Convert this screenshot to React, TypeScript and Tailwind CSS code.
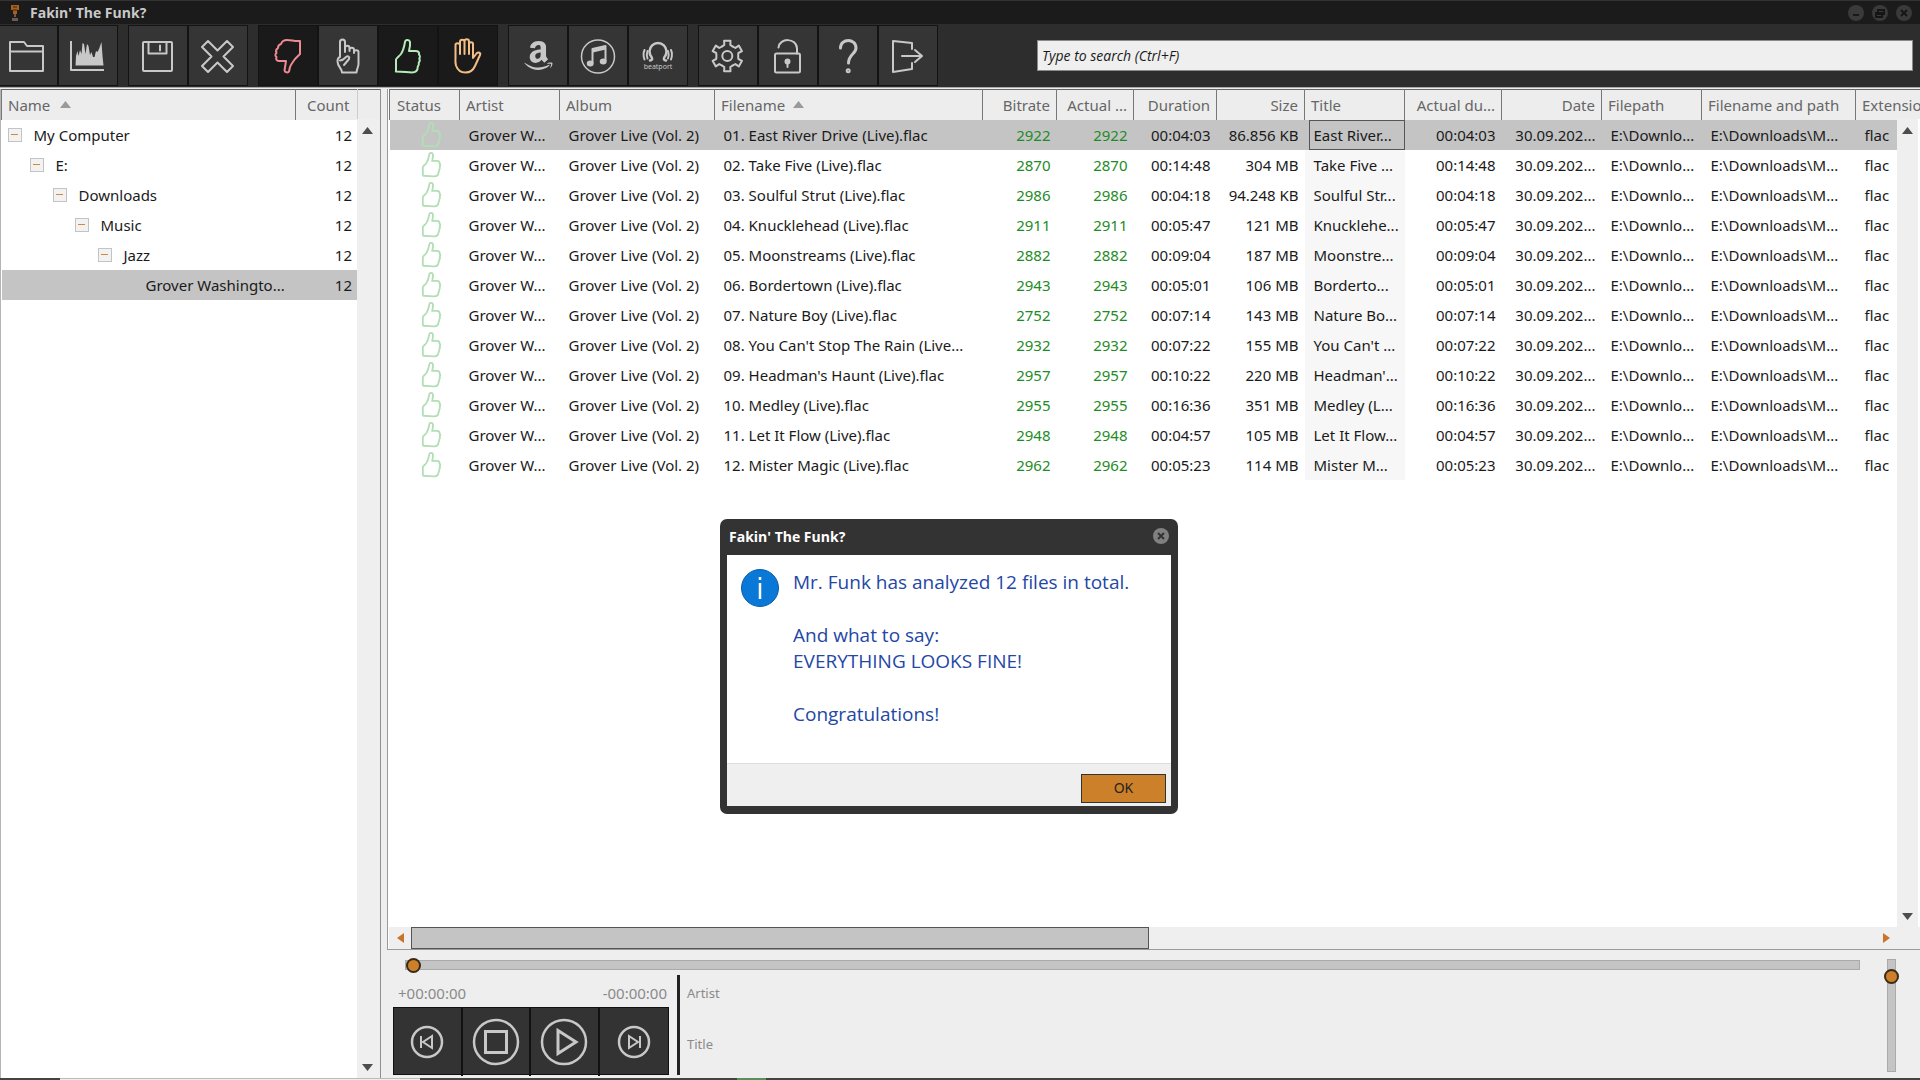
import React from "react";
import { FaAmazon } from "react-icons/fa";

const THUMB_UP =
  "M8 35.5v-12c0-1 3-3 5-5.5 2-3 3-6 4-12 .5-3 4.5-2.5 5 0 .3 3-.2 6-1 9h6.5c3 0 4 1.5 3.5 3.5 1 1 1.2 3 .3 4 .8 1.5.5 3-.5 4 .3 1.8 0 3-1 4 0 4-2.5 6-6 6-5 0-8-1-16-1z";

function Icon({ children, width = 2 }: { children: React.ReactNode; width?: number }) {
  return (
    <svg
      viewBox="0 0 40 40"
      className="size-10"
      fill="none"
      stroke="currentColor"
      strokeWidth={width}
      strokeLinejoin="round"
      strokeLinecap="round"
      aria-hidden="true"
    >
      {children}
    </svg>
  );
}

const gearPoints = Array.from({ length: 6 })
  .flatMap((_, k) => {
    const mid = -90 + k * 60;
    return [
      [-24, 11],
      [-15, 11.5],
      [-12, 15.5],
      [12, 15.5],
      [15, 11.5],
      [24, 11],
    ].map(([a, r]) => {
      const t = ((mid + a) * Math.PI) / 180;
      return `${(19.3 + r * Math.cos(t)).toFixed(1)},${(20 + r * Math.sin(t)).toFixed(1)}`;
    });
  })
  .join(" ");

type Tool = { label: string; icon: React.ReactNode; tone?: string };

const toolGroups: Tool[][] = [
  [
    { label: "Open folder", icon: <Icon><path d="M2 35V6h14l3 4h16v25zM2 15.5h33" /></Icon> },
    {
      label: "Spectrum",
      icon: (
        <Icon>
          <path d="M3 5v29h33" strokeLinecap="butt" />
          <path
            fill="currentColor"
            stroke="none"
            d="M7.500 29.500 8 20l1.500-5 1 5 1.500-6 1.500 4L14.500 7l1.500 1 1.500 10L19 8l1.500 2 1.500 9 1.500-3 1.500 5 1.500 0 1.500-6 1.500 1 1.500-3L33.500 6l1 14 1 9.500z"
          />
        </Icon>
      ),
    },
  ],
  [
    { label: "Save", icon: <Icon><rect x="5" y="6" width="29" height="29" rx="1" /><path d="M10.500 6v11.500h18V6M22 9.500v5" /></Icon> },
    { label: "Remove", icon: <Icon><path d="M10 5l9.500 9.500L29 5l6 6-9.500 9.500L35 30l-6 6-9.500-9.500L10 36l-6-6 9.500-9.500L4 11z" /></Icon> },
  ],
  [
    {
      label: "Show fakes",
      tone: "bg-[#1a1a1a] text-[#ee8a92]",
      icon: (
        <Icon>
          <path d="M32 5v13l-5 5c-2 3-4 5-5 8l-1 4.500c-1 1.500-4 1-4.500-1l1.500-9.500h-7c-2.500 0-3.500-2-2.500-4-1.500-1-1.500-3 0-4-1-2 0-4 1.500-5 0-2 1-3.500 3-4 1-3 3-4 6-4 5 0 7 1.500 13 1z" />
        </Icon>
      ),
    },
    {
      label: "Show unchecked",
      icon: (
        <Icon>
          <path d="M12 21V6c0-3.500 5-3.500 5 0v10M17 15v-3c0-3 4.500-3 4.500 0v3M21.500 14c0-3 4.500-3 4.500 0v3M26 16c0-2.500 4.500-2.500 4.500 0v12c0 3-1.500 4-2 8.500H14c0-4-4.500-6-4.500-11 0-3 .5-4 2.500-4.500M12 24.500c3 0 4-1.500 6-3.500 2-1.500 4 0 3 2l-5 6" />
        </Icon>
      ),
    },
    { label: "Show good", tone: "bg-[#1a1a1a] text-[#b4ecb8]", icon: <Icon><path d={THUMB_UP} /></Icon> },
    {
      label: "Show stopped",
      tone: "bg-[#1a1a1a] text-[#f3bd86]",
      icon: (
        <Icon>
          <path d="M7.500 22V9c0-2.500 4-2.500 4.500 0v9V6c0-3 4.500-3 4.500 0v12V5.500c0-3 4.500-3 4.500 0V18V8c0-2.500 4-2.500 4 0v14l3.500-4.500c2-2 4.500-.5 3.500 1.500l-5 11c-2 4.500-5 6.500-9.500 6.500-5.500 0-8-2.500-9.500-7-1-4-.5-5-.5-7.500z" />
        </Icon>
      ),
    },
  ],
  [
    { label: "Amazon", icon: <FaAmazon className="size-[33px]" aria-hidden="true" /> },
    {
      label: "iTunes",
      icon: (
        <Icon width={2}>
          <circle cx="20" cy="20.500" r="16.500" strokeWidth="1.500" />
          <path d="M14.500 27V13l13-3v15" strokeLinecap="butt" />
          <path d="M14.500 15l13-3" strokeWidth="3" strokeLinecap="butt" />
          <ellipse cx="12.200" cy="27.500" rx="2.500" ry="2" fill="currentColor" />
          <ellipse cx="25.200" cy="25.500" rx="2.500" ry="2" fill="currentColor" />
        </Icon>
      ),
    },
    {
      label: "Beatport",
      icon: (
        <Icon>
          <path strokeWidth="2.500" d="M12 24.500c2.500-.5 2.500-1.500 1.500-3.500A8.500 8.500 0 1 1 26.500 21c-1 2-1 3 1.500 3.500" />
          <path d="M6.500 14c-1.300 3-1.300 6 0 9.500M9.500 15c-1 3-1 5 0 7.500M33 14c1.300 3 1.300 6 0 9.500M30 15c1 3 1 5 0 7.500" />
          <text x="20" y="33" textAnchor="middle" fontSize="7" fill="currentColor" stroke="none">
            beatport
          </text>
        </Icon>
      ),
    },
  ],
  [
    { label: "Settings", icon: <Icon><polygon points={gearPoints} /><circle cx="19.300" cy="20" r="5" /></Icon> },
    {
      label: "Unlock",
      icon: (
        <Icon>
          <rect x="7" y="17.500" width="25" height="19" rx="1.500" />
          <path d="M10.500 11.500c1-10 18-10 18.500 1v5" />
          <circle cx="19.500" cy="25.500" r="2" fill="currentColor" />
          <path d="M19.500 26v5" />
        </Icon>
      ),
    },
    {
      label: "Help",
      icon: (
        <Icon width={3}>
          <path d="M12.500 12c0-10 15.500-10 15.500 0 0 6-7.500 6.500-7.500 15" />
          <circle cx="20.200" cy="34.700" r="1" />
        </Icon>
      ),
    },
    { label: "Exit", icon: <Icon><path d="M24 13V7L5 5v31l19-3v-6M14 20h20M27 14l7 6-7 6" /></Icon> },
  ],
];

type Column = { name: string; width: string; right?: boolean; sorted?: boolean; tint?: string };

const columns: Column[] = [
  { name: "Artist", width: "w-[100px]" },
  { name: "Album", width: "w-[155px]" },
  { name: "Filename", width: "w-[268px]", sorted: true },
  { name: "Bitrate", width: "w-[74px]", right: true, tint: "text-[#1d8c26]" },
  { name: "Actual ...", width: "w-[77px]", right: true, tint: "text-[#1d8c26]" },
  { name: "Duration", width: "w-[83px]", right: true },
  { name: "Size", width: "w-[88px]", right: true },
  { name: "Title", width: "w-[100px]" },
  { name: "Actual du...", width: "w-[97px]", right: true },
  { name: "Date", width: "w-[100px]", right: true },
  { name: "Filepath", width: "w-[100px]" },
  { name: "Filename and path", width: "w-[154px]" },
];

const tracks: [string, string, string, string, string][] = [
  ["01. East River Drive (Live).flac", "2922", "00:04:03", "86.856 KB", "East River..."],
  ["02. Take Five (Live).flac", "2870", "00:14:48", "304 MB", "Take Five ..."],
  ["03. Soulful Strut (Live).flac", "2986", "00:04:18", "94.248 KB", "Soulful Str..."],
  ["04. Knucklehead (Live).flac", "2911", "00:05:47", "121 MB", "Knucklehe..."],
  ["05. Moonstreams (Live).flac", "2882", "00:09:04", "187 MB", "Moonstre..."],
  ["06. Bordertown (Live).flac", "2943", "00:05:01", "106 MB", "Borderto..."],
  ["07. Nature Boy (Live).flac", "2752", "00:07:14", "143 MB", "Nature Bo..."],
  ["08. You Can't Stop The Rain (Live...", "2932", "00:07:22", "155 MB", "You Can't ..."],
  ["09. Headman's Haunt (Live).flac", "2957", "00:10:22", "220 MB", "Headman'..."],
  ["10. Medley (Live).flac", "2955", "00:16:36", "351 MB", "Medley (L..."],
  ["11. Let It Flow (Live).flac", "2948", "00:04:57", "105 MB", "Let It Flow..."],
  ["12. Mister Magic (Live).flac", "2962", "00:05:23", "114 MB", "Mister M..."],
];

const folders = [
  { name: "My Computer", indent: "pl-[6px]" },
  { name: "E:", indent: "pl-[28px]" },
  { name: "Downloads", indent: "pl-[51px]" },
  { name: "Music", indent: "pl-[73px]" },
  { name: "Jazz", indent: "pl-[96px]" },
];

const arrows = {
  up: "M0 7L5.500 0 11 7z",
  down: "M0 0h11L5.500 7z",
};

function Arrow({ dir, className }: { dir: "up" | "down"; className: string }) {
  return (
    <svg viewBox="0 0 11 7" className={`h-[7px] w-[11px] ${className}`} fill="currentColor" aria-hidden="true">
      <path d={arrows[dir]} />
    </svg>
  );
}

function VerticalScrollbar() {
  return (
    <div className="flex h-full flex-col items-center justify-between bg-[#efefef]">
      <button type="button" aria-label="Scroll up" className="flex h-[22px] w-full items-center justify-center">
        <Arrow dir="up" className="text-[#4d4d4d]" />
      </button>
      <button type="button" aria-label="Scroll down" className="flex h-[22px] w-full items-center justify-center">
        <Arrow dir="down" className="text-[#4d4d4d]" />
      </button>
    </div>
  );
}

function FolderTree() {
  return (
    <aside className="relative w-[381px] shrink-0 overflow-hidden border-x border-l-[#b5b5b5] border-r-[#8f8f8f] bg-white">
      <table className="w-full table-fixed border-collapse">
        <thead>
          <tr className="h-[30px] border-t border-[#666] bg-[#ededed] text-[#666]">
            <th className="border-l border-[#777] pl-[6px] text-left font-normal">
              <span className="flex items-center gap-[10px]">
                Name <Arrow dir="up" className="text-[#9a9a9a]" />
              </span>
            </th>
            <th className="w-[62px] border-l border-[#777] pr-[7px] text-right font-normal">Count</th>
            <th className="w-[23px] border-l border-[#ccc]" aria-label="Scrollbar" />
          </tr>
        </thead>
        <tbody>
          {folders.map((f) => (
            <tr key={f.name} className="h-[30px]">
              <td className={f.indent}>
                <span className="flex items-center gap-[12px]">
                  <button
                    type="button"
                    aria-label={`Collapse ${f.name}`}
                    className="flex size-[14px] items-center justify-center border border-[#bfc3cc] bg-[#f4f2ee]"
                  >
                    <span className="h-px w-[7px] bg-[#c98a4b]" />
                  </button>
                  {f.name}
                </span>
              </td>
              <td className="pr-[5px] text-right">12</td>
              <td />
            </tr>
          ))}
          <tr className="h-[30px] bg-[#c4c4c4]">
            <td className="whitespace-nowrap pl-[144px]">Grover Washingto...</td>
            <td className="pr-[5px] text-right">12</td>
            <td />
          </tr>
        </tbody>
      </table>
      <div className="absolute top-[30px] right-0 bottom-0 w-[23px] pr-[3px]  bg-[#efefef]">
        <VerticalScrollbar />
      </div>
    </aside>
  );
}

function TrackTable() {
  return (
    <section className="relative flex min-h-0 flex-1 flex-col overflow-hidden border-b border-l border-[#9a9a9a] bg-white pl-px">
      <div className="min-h-0 flex-1 overflow-hidden">
        <table className="w-full table-fixed border-collapse whitespace-nowrap">
          <thead>
            <tr className="h-[30px] border-t border-[#666] bg-[#ededed] text-[#666]">
              <th className="w-[70px] border-l border-[#777] pl-[7px] text-left font-normal">Status</th>
              {columns.map((c) => (
                <th
                  key={c.name}
                  className={`border-l border-[#777] px-[6px] font-normal ${c.width} ${c.right ? "text-right" : "text-left"}`}
                >
                  {c.sorted ? (
                    <span className="flex items-center gap-[8px]">
                      {c.name} <Arrow dir="up" className="text-[#9a9a9a]" />
                    </span>
                  ) : (
                    c.name
                  )}
                </th>
              ))}
              <th className="overflow-hidden border-l border-[#777] pl-[6px] text-left font-normal">Extension</th>
            </tr>
          </thead>
          <tbody>
            {tracks.map(([file, rate, time, size, title], i) => {
              const selected = i === 0;
              const values = [
                "Grover W...",
                "Grover Live (Vol. 2)",
                file,
                rate,
                rate,
                time,
                size,
                title,
                time,
                "30.09.202...",
                "E:\\Downlo...",
                "E:\\Downloads\\M...",
              ];
              return (
                <tr key={file} className={`h-[30px] ${selected ? "bg-[#c4c4c4]" : ""}`}>
                  <td className="pl-[27px]">
                    <svg
                      viewBox="0 0 40 40"
                      className="size-[29px]"
                      fill="none"
                      stroke="#b2deb5"
                      strokeWidth="2.500"
                      role="img"
                      aria-label="Good"
                    >
                      <path d={THUMB_UP} />
                    </svg>
                  </td>
                  {columns.map((c, k) =>
                    c.name === "Title" ? (
                      <td key={c.name} className={selected ? "pl-[4px]" : "bg-[#f7f7f7] pl-[4px]"}>
                        <span
                          className={`flex h-[30px] items-center border px-1 ${selected ? "border-[#555]" : "border-transparent"}`}
                        >
                          {values[k]}
                        </span>
                      </td>
                    ) : (
                      <td
                        key={c.name}
                        className={`${c.right ? "pr-[6px] text-right" : "pl-[9px]"} ${c.tint ?? ""}`}
                      >
                        {values[k]}
                      </td>
                    ),
                  )}
                  <td className="pl-[9px]">flac</td>
                </tr>
              );
            })}
          </tbody>
        </table>
      </div>
      <div className="flex h-[22px] items-center bg-[#efefef] pr-[23px]">
        <button type="button" aria-label="Scroll left" className="flex h-full w-[22px] items-center justify-center">
          <svg viewBox="0 0 7 10" className="h-[10px] w-[7px]" fill="#c8742a" aria-hidden="true">
            <path d="M7 0v10L0 5z" />
          </svg>
        </button>
        <div className="h-full flex-1">
          <div className="h-full w-[50.4%] border border-[#555] bg-[#c4c4c4]" />
        </div>
        <button type="button" aria-label="Scroll right" className="flex h-full w-[21px] items-center justify-center">
          <svg viewBox="0 0 7 10" className="h-[10px] w-[7px]" fill="#c8742a" aria-hidden="true">
            <path d="M0 0v10l7-5z" />
          </svg>
        </button>
      </div>
      <div className="absolute top-[30px] right-0 bottom-[22px] w-[23px] border-r-2 border-white">
        <VerticalScrollbar />
      </div>
    </section>
  );
}

const transport = [
  { label: "Previous", r: 15, glyph: "M29 29v12M40 29v12l-9-6z" },
  { label: "Stop", r: 22, glyph: "M24.500 24.500h21v21h-21z" },
  { label: "Play", r: 22, glyph: "M29 23.500v23l18-11.500z" },
  { label: "Next", r: 15, glyph: "M41 29v12M30 29v12l9-6z" },
];

function Player() {
  return (
    <footer className="flex h-[128px] shrink-0 bg-[#eeeeee] pr-6 pl-3">
      <div className="flex min-w-0 flex-1 flex-col">
        <input
          type="range"
          aria-label="Position"
          defaultValue={0}
          className="mt-[10px] mr-[27px] ml-[12px] h-[10px] appearance-none border border-[#aaa] bg-[#c4c4c4] [&::-webkit-slider-thumb]:size-[15px] [&::-webkit-slider-thumb]:appearance-none [&::-webkit-slider-thumb]:rounded-full [&::-webkit-slider-thumb]:border-2 [&::-webkit-slider-thumb]:border-[#3a2a18] [&::-webkit-slider-thumb]:bg-[#cc8029]"
        />
        <div className="flex">
          <div className="mr-[8px] w-[276px] pt-[9px] text-[#8a8a8a]">
            <div className="flex h-[28px] items-center justify-between pr-[2px] pl-[5px]">
              <span>+00:00:00</span>
              <span>-00:00:00</span>
            </div>
            <div className="grid h-[68px] grid-cols-4 divide-x-2 divide-[#111] border border-[#111] bg-[#333] text-[#c8c8c8]">
              {transport.map((t) => (
                <button key={t.label} type="button" aria-label={t.label} className="flex items-center justify-center">
                  <svg viewBox="1 1 68 68" className="size-[68px] shrink-0" fill="none" stroke="currentColor" strokeWidth="2" aria-hidden="true">
                    <circle cx="35" cy="35" r={t.r} strokeWidth="2.500" />
                    <path d={t.glyph} strokeWidth={t.r > 20 ? 3 : 2} />
                  </svg>
                </button>
              ))}
            </div>
          </div>
          <div className="mt-[5px] flex h-[100px] flex-col gap-[33px] border-l-[3px] border-[#222] pt-[9px] pl-[7px] text-[13px] leading-[18px] text-[#8a8a8a]">
            <span>Artist</span>
            <span>Title</span>
          </div>
        </div>
      </div>
      <input
        type="range"
        aria-label="Volume"
        defaultValue={91}
        className="mt-[9px] h-[113px] w-[9px] appearance-none border border-[#aaa] bg-[#c4c4c4] [direction:rtl] [writing-mode:vertical-lr] [&::-webkit-slider-thumb]:size-[15px] [&::-webkit-slider-thumb]:appearance-none [&::-webkit-slider-thumb]:rounded-full [&::-webkit-slider-thumb]:border-2 [&::-webkit-slider-thumb]:border-[#3a2a18] [&::-webkit-slider-thumb]:bg-[#cc8029]"
      />
    </footer>
  );
}

function ResultDialog() {
  return (
    <div
      role="dialog"
      aria-labelledby="dialog-title"
      className="absolute top-[519px] left-[720px] w-[458px] rounded-[7px] bg-[#333] px-[7px] pb-[8px]"
    >
      <div className="flex h-9 items-center justify-between pr-[2px] pl-[2px]">
        <h2 id="dialog-title" className="font-['Open_Sans',sans-serif] text-[14px] font-bold text-white">
          Fakin' The Funk?
        </h2>
        <button type="button" aria-label="Close dialog" className="mb-[2px]">
          <svg viewBox="0 0 16 16" className="size-4" aria-hidden="true">
            <circle cx="8" cy="8" r="8" fill="#808080" />
            <path d="M5 5l6 6M11 5l-6 6" stroke="#333" strokeWidth="2" />
          </svg>
        </button>
      </div>
      <div className="flex h-[208px] gap-[14px] bg-white pt-[14px] pl-[14px]">
        <svg viewBox="0 0 38 38" className="size-[38px] shrink-0" aria-hidden="true">
          <circle cx="19" cy="19" r="18.500" fill="#0a78d6" stroke="#0a5fae" />
          <path d="M19 14v16M19 8v3" stroke="#fff" strokeWidth="2.500" />
        </svg>
        <div className="font-['Open_Sans',sans-serif] text-[19px] leading-[26px] whitespace-nowrap text-[#2447a6]">
          <p>Mr. Funk has analyzed 12 files in total.</p>
          <p className="mt-[27px]">And what to say:</p>
          <p>EVERYTHING LOOKS FINE!</p>
          <p className="mt-[27px]">Congratulations!</p>
        </div>
      </div>
      <div className="flex h-[43px] items-center justify-end border-t border-[#ddd] bg-[#efefef] pt-[6px] pr-[5px]">
        <button type="button" className="h-[29px] w-[85px] border border-[#333] bg-[#cc8029] text-[14px] text-[#222]">
          OK
        </button>
      </div>
    </div>
  );
}

export default function App() {
  return (
    <div className="relative flex h-screen flex-col overflow-hidden bg-[#eeeeee] font-['Noto_Sans','Open_Sans',sans-serif] text-[15px] leading-5 text-[#1a1a1a]">
      <header className="flex h-6 shrink-0 items-center justify-between border-t border-[#333] bg-[#1b1b1b] pr-2 pl-[9px]">
        <div className="flex items-center gap-[9px]">
          <svg viewBox="0 0 12 18" className="h-[18px] w-3" aria-hidden="true">
            <path d="M2 1h8v5H8v4H4V6H2z" fill="#a85f1e" />
            <path d="M4 3h4M4 6h4" stroke="#3a2412" />
            <path d="M5 10h2v3H5zM3 14h6v3H3z" fill="#6b5a55" />
          </svg>
          <h1 className="font-['Open_Sans',sans-serif] text-[14px] font-bold text-[#c9c9c9]">Fakin' The Funk?</h1>
        </div>
        <div className="flex gap-2">
          {[
            { label: "Minimize", d: "M5 10h6" },
            { label: "Restore", d: "M6 5h6v4H6zM4 8h6v4H4z" },
            { label: "Close", d: "M5 5l6 6M11 5l-6 6" },
          ].map((b) => (
            <button key={b.label} type="button" aria-label={b.label}>
              <svg viewBox="0 0 16 16" className="size-4" aria-hidden="true">
                <circle cx="8" cy="8" r="8" fill="#3a3a3a" />
                <path d={b.d} stroke="#151515" strokeWidth="1.800" fill="none" />
              </svg>
            </button>
          ))}
        </div>
      </header>

      <div className="flex h-[63px] shrink-0 items-center bg-[#2d2d2d] pr-[7px]">
        <nav className="flex gap-[10px]" aria-label="Tools">
          {toolGroups.map((group, g) => (
            <div key={g} className={`flex ${g === 0 ? "-ml-[2px]" : ""}`}>
              {group.map((t) => (
                <button
                  key={t.label}
                  type="button"
                  aria-label={t.label}
                  title={t.label}
                  className={`flex h-[61px] w-[60px] items-center justify-center border border-[#131313] ${t.tone ?? "bg-[#353535] text-[#c8c8c8]"}`}
                >
                  {t.icon}
                </button>
              ))}
            </div>
          ))}
        </nav>
        <input
          type="search"
          aria-label="Search"
          placeholder="Type to search (Ctrl+F)"
          className="ml-[99px] h-[31px] min-w-0 flex-1 border border-[#8a8a8a] bg-[#efefef] px-1 font-['Open_Sans',sans-serif] text-[14px] italic outline-none placeholder:text-[#1a1a1a]"
        />
      </div>

      <main className="flex min-h-0 flex-1 border-t border-[#aaa] bg-[#eeeeee] pt-px">
        <FolderTree />
        <div className="flex min-w-0 flex-1 flex-col">
          <div className="flex min-h-0 flex-1 pl-[6px]">
            <TrackTable />
          </div>
          <Player />
        </div>
      </main>

      <div className="flex h-[2px] shrink-0 bg-[#444]">
        <div className="w-[60px]" />
        <div className="w-[360px] border-t border-[#bbb] bg-[#eee]" />
        <div className="ml-[317px] w-[29px] bg-[#5a8f5c]" />
      </div>

      <ResultDialog />
    </div>
  );
}
